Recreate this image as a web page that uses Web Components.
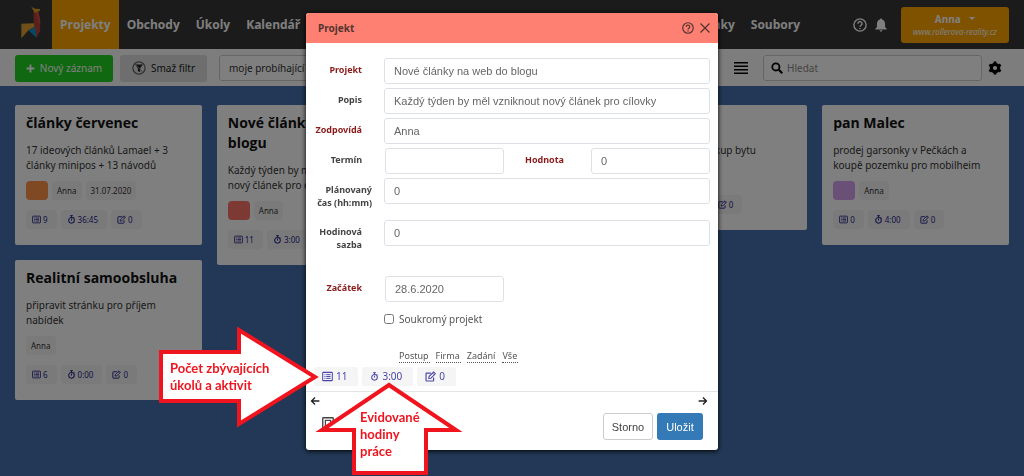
<!DOCTYPE html>
<html lang="cs">
<head>
<meta charset="utf-8">
<title>Projekty</title>
<style>
  html, body { height: 100%; margin: 0; }
  body { font: 10px/15px "Noto Sans", "Open Sans", sans-serif; color: #333; overflow: hidden; }
</style>
</head>
<body>
<crm-app></crm-app>
<script>
const ICONS = {
  list: '<rect x="1" y="2" width="14" height="12" rx="1" fill="none" stroke="currentColor" stroke-width="1.5"/><path d="M3.5 5.3h1.5M6.2 5.3h6.3M3.5 8h1.5M6.2 8h6.3M3.5 10.7h1.5M6.2 10.7h6.3" stroke="currentColor" stroke-width="1.4"/>',
  timer: '<circle cx="8" cy="9.5" r="5" fill="none" stroke="currentColor" stroke-width="1.8"/><path d="M5.5 1.2h5M8 1v3M8 6.5v3.5M12 4l1.5 1.5" stroke="currentColor" stroke-width="1.7"/>',
  edit: '<path d="M8.5 3H2.5a1 1 0 0 0-1 1v9.500a1 1 0 0 0 1 1h9a1 1 0 0 0 1-1V9.500" fill="none" stroke="currentColor" stroke-width="1.7"/><path d="M5.500 10.800l.5-3L12.500 1.500l2.500 2.500-6.500 6.500z" fill="none" stroke="currentColor" stroke-width="1.500"/><path d="M11 3l2.500 2.500" stroke="currentColor" stroke-width="1.200"/>',
  help: '<circle cx="8" cy="8" r="7" fill="none" stroke="currentColor" stroke-width="1.600"/><path d="M5.700 6.500a2.300 2.300 0 1 1 3.600 1.800c-.9.600-1.300.9-1.300 1.800" fill="none" stroke="currentColor" stroke-width="1.600"/><circle cx="8" cy="12" r=".9" fill="currentColor"/>',
  bell: '<path d="M8 .5a1.200 1.200 0 0 1 1.200 1.300C11.500 2.400 12.700 4.500 12.700 7v3.500l1.800 1.800v.9h-13v-.9l1.800-1.800V7c0-2.500 1.200-4.600 3.500-5.200A1.200 1.200 0 0 1 8 .5zM6.400 14h3.200a1.600 1.600 0 0 1-3.200 0z" fill="currentColor"/>',
  plus: '<path d="M8 1v14M1 8h14" stroke="currentColor" stroke-width="3.400"/>',
  filter: '<circle cx="8" cy="8" r="7" fill="none" stroke="#666" stroke-width="1.500"/><path d="M3.500 4h9L9.300 8.200v4.600l-2.600-1.500V8.200z" fill="currentColor"/><path d="M3.500 3.500l9 9.500" stroke="#888" stroke-width="1"/>',
  lines: '<path d="M0 2h16M0 6h16M0 10h16M0 14h16" stroke="currentColor" stroke-width="1.900"/>',
  search: '<circle cx="6.500" cy="6.500" r="4.800" fill="none" stroke="currentColor" stroke-width="2.400"/><path d="M10 10l5 5" stroke="currentColor" stroke-width="2.800"/>',
  gear: '<circle cx="8" cy="8" r="4.200" fill="none" stroke="currentColor" stroke-width="3.600"/><path d="M8 .500v3M8 12.500v3M1.500 4.250l2.600 1.500M11.900 10.250l2.600 1.500M1.500 11.750l2.600-1.500M11.900 5.750l2.600-1.500" stroke="currentColor" stroke-width="3.200"/>',
  close: '<path d="M2 2l12 12M14 2L2 14" stroke="currentColor" stroke-width="1.700"/>',
  left: '<path d="M15 8H3M8 2.500L2.500 8 8 13.500" fill="none" stroke="currentColor" stroke-width="2.200"/>',
  right: '<path d="M1 8h12M8 2.500L13.500 8 8 13.500" fill="none" stroke="currentColor" stroke-width="2.200"/>',
  note: '<rect x="1" y="1" width="14" height="14" rx="1" fill="none" stroke="currentColor" stroke-width="1.800"/><rect x="4.500" y="4.500" width="7" height="7" fill="none" stroke="currentColor" stroke-width="1.600"/>'
};

// Registers an element whose shadow root is rendered from its attributes.
function element(name, css, render) {
  customElements.define(name, class extends HTMLElement {
    constructor() {
      super();
      this.attachShadow({ mode: 'open' });
    }
    connectedCallback() {
      const t = document.createElement('template');
      t.innerHTML = '<style>*{box-sizing:border-box}button,input,select{font:inherit;color:inherit;margin:0}button{border:0;background:none;padding:0}a{color:inherit;text-decoration:none}' + css + '</style>' +
        render(key => this.getAttribute(key) || '', this);
      this.shadowRoot.replaceChildren(t.content.cloneNode(true));
    }
  });
}

element('ui-icon', ':host{display:block;flex:none;width:12px;height:12px}svg{display:block;width:100%;height:100%}',
  a => `<svg viewBox="0 0 16 16" aria-hidden="true">${ICONS[a('name')]}</svg>`);

element('crm-logo', ':host{display:block;flex:none;width:21px;height:33px}svg{display:block;width:100%;height:100%}',
  () => `<svg viewBox="30 17 63 99" aria-hidden="true">
    <path d="M70 36L85 34 91 62 90 92 80 113 73 90z" fill="#b5413a"/>
    <path d="M78 36L85 34 91 62 88 72z" fill="#d2503e"/>
    <path d="M64 19L75 25 91 26 89 32 74 38z" fill="#e09a1e"/>
    <path d="M34 70L72 69 73 80 56 89 34 114z" fill="#e0a030"/>
    <path d="M55 90L75 80 80 113z" fill="#1290c4"/>
    <path d="M30 78L35 70 35 78z" fill="#3a8ac0"/></svg>`);

element('crm-nav', `
  :host{display:flex;align-items:stretch;min-height:49px;background:#363636;color:#fff;padding:0 15px 0 20px}
  crm-logo{margin:6px 11px 0 0}
  nav{display:flex;flex:1;font:700 12px/49px "Open Sans","Noto Sans",sans-serif}
  a{padding:0 8px}
  a.on{background:#ffa500}
  .gap{flex:1}
  .tools{display:flex;align-items:center;gap:7px;margin:0 13px 0 45px}
  ui-icon{width:14px;height:14px}
  .me{align-self:center;width:108px;height:36px;margin-top:1px;border-radius:3px;background:#ffa500;font-size:8px;line-height:12px;font-style:italic}
  .me b{display:block;font-size:10px;font-style:normal;line-height:13px}
  .me i{display:inline-block;border:3px solid transparent;border-top-color:#fff;border-bottom:0;margin:0 0 3px 6px}`,
  () => `<crm-logo></crm-logo>
  <nav><a class="on" href="#projekty">Projekty</a><a href="#obchody">Obchody</a><a href="#ukoly">Úkoly</a><a href="#kalendar">Kalendář</a>
  <span class="gap"></span><a href="#stranky">Stránky</a><a href="#soubory">Soubory</a></nav>
  <div class="tools"><button aria-label="Nápověda"><ui-icon name="help"></ui-icon></button><button aria-label="Upozornění"><ui-icon name="bell"></ui-icon></button></div>
  <button class="me"><b>Anna <i></i></b>www.rollerova-reality.cz</button>`);

element('crm-toolbar', `
  :host{display:flex;align-items:center;min-height:37px;padding:1px 22px 0 15px;background:#fbfbfb;color:#333}
  button{display:flex;align-items:center;justify-content:center;height:27px;border-radius:3px}
  .new{width:98px;gap:5px;background:#20d020;color:#fff}
  .new ui-icon{width:9px;height:9px}
  .clear{width:87px;gap:5px;margin:0 12px 0 7px;background:#dcdcdc;color:#222}
  .clear ui-icon{width:14px;height:14px}
  select{appearance:none;width:190px;height:26px;padding:0 9px;border:1px solid #ccc;border-radius:3px;background:#fff}
  .gap{flex:1}
  .view,.gear{color:#000}
  .view ui-icon,.gear ui-icon{width:14px;height:14px}
  label{display:flex;align-items:center;gap:4px;width:219px;height:26px;margin:0 6px 0 15px;padding-left:7px;border:1px solid #ccc;border-radius:3px;background:#fff;color:#000}
  input{flex:1;min-width:0;border:0;background:none;padding:0}
  input::placeholder{color:#888;opacity:1}`,
  () => `<button class="new"><ui-icon name="plus"></ui-icon>Nový záznam</button>
  <button class="clear"><ui-icon name="filter"></ui-icon>Smaž filtr</button>
  <select aria-label="Filtr"><option>moje probíhající</option></select>
  <span class="gap"></span>
  <button class="view" aria-label="Seznam"><ui-icon name="lines"></ui-icon></button>
  <label><ui-icon name="search"></ui-icon><input type="search" placeholder="Hledat" aria-label="Hledat"></label>
  <button class="gear" aria-label="Nastavení"><ui-icon name="gear"></ui-icon></button>`);

element('stat-chip', `
  :host{display:flex;align-items:center;height:19px;gap:2px;padding:0 9px 0 6px;border-radius:4px;background:#f5f5f5;color:#24248c;font-size:8px}
  ui-icon{width:9px;height:9px}
  :host([large]){gap:3px;padding:0 11px 0 8px;border-radius:3px 3px 0 0;color:#4a45a8;font-size:10px}
  :host([large]) ui-icon{width:11px;height:11px}
  :host([large]) ui-icon[name=timer]{width:9px;height:9px}`,
  a => `<ui-icon name="${a('icon')}"></ui-icon><span><slot></slot></span>`);

element('project-card', `
  :host{display:block;padding:8px 11px 16px;border-radius:2px;background:#fff}
  h2{margin:0 0 10px;font:700 14px/20px "Open Sans","Noto Sans",sans-serif;color:#111}
  p{margin:0 0 8px;padding-right:8px}
  div{display:flex;gap:4px;height:19px}
  .tags{margin-bottom:10px;font-size:8px;line-height:19px}
  .tags span{padding:0 5px;border-radius:4px;background:#f5f5f5}
  .tags .c{width:22px;padding:0}`,
  a => `<h2>${a('name')}</h2><p><slot></slot></p>
  <div class="tags">${a('color') && `<span class="c" style="background:${a('color')}"></span>`}<span>Anna</span>${a('date') && `<span>${a('date')}</span>`}</div>
  <div><stat-chip icon="list">${a('tasks')}</stat-chip><stat-chip icon="timer">${a('time')}</stat-chip><stat-chip icon="edit">0</stat-chip></div>`);

element('crm-board', `
  :host{display:grid;grid-template-columns:repeat(5,minmax(0,1fr));gap:15px;padding:19px 15px;background:#4671ac}
  section{display:flex;flex-direction:column;gap:15px}`,
  () => `<section>
    <project-card name="články červenec" color="#ff9248" date="31.07.2020" tasks="9" time="36:45">17 ideových článků Lamael + 3 články minipos + 13 návodů</project-card>
    <project-card name="Realitní samoobsluha" tasks="6" time="0:00">připravit stránku pro příjem nabídek</project-card></section>
  <section><project-card name="Nové články na web do blogu" color="#fa7268" tasks="11" time="3:00">Každý týden by měl vzniknout nový článek pro cílovky</project-card></section>
  <section></section>
  <section><project-card name="Byt" color="#fa7268" tasks="0" time="0:00">prodej domu a nákup bytu</project-card></section>
  <section><project-card name="pan Malec" color="#d4a0ee" tasks="0" time="4:00">prodej garsonky v Pečkách a koupě pozemku pro mobilheim</project-card></section>`);

element('form-field', `
  :host{display:grid;grid-template-columns:78px 1fr;align-items:start}
  label{padding:5px 22px 0 0;text-align:right;font-size:9px;font-weight:700;line-height:13px;color:#444}
  :host([required]) label{color:#8b1a1a}
  :host([wide-label]) label{padding-right:12px}
  input{width:100%;height:26px;padding:0 9px;border:1px solid #dde1e5;border-radius:3px;background:#fff;color:#666;font:11px "Liberation Sans",Arial,sans-serif}
  :host([short]) input{width:119px;justify-self:end}
  :host([start]) input{justify-self:start;margin-left:1px}`,
  a => `<label for="f">${a('label')}</label><input id="f" value="${a('value')}">`);

element('callout-arrow', `
  :host{display:block;position:absolute;color:#f0141e;font:700 13px/17px Lato,sans-serif}
  svg{display:block;overflow:visible}
  path{fill:#fff;stroke:#f0141e;stroke-width:4}
  p{position:absolute;margin:0;white-space:pre-line}
  :host([side]) p{left:11px;top:36px}
  :host([up]) p{left:47px;top:28px}`,
  (a, el) => el.hasAttribute('side')
    ? `<svg width="160" height="106"><path d="M2 28H80V6L156 53 80 100V77H2z"/></svg><p><slot></slot></p>`
    : `<svg width="152" height="96"><path d="M76 4L143 49H113V92H41V49H9z"/></svg><p><slot></slot></p>`);

element('project-dialog', `
  :host{display:block;position:relative;width:412px;border-radius:3px;background:#fff;box-shadow:0 1px 5px #000}
  header{display:flex;align-items:center;gap:5px;height:30px;padding:0 7px 0 12px;border-radius:3px 3px 0 0;background:#fd8072;color:#54342e}
  h1{flex:1;margin:0;font-size:10px;line-height:15px}
  ui-icon{width:12px;height:12px}
  form{display:flex;flex-direction:column;gap:4px;padding:15px 8px 0 0}
  .pair{display:grid;grid-template-columns:1fr 1fr}
  .rate{margin-top:7px}
  .start{margin-top:21px}
  .private{display:flex;align-items:center;gap:5px;height:16px;margin:5px 0 0 78px;color:#555}
  .private input{width:10px;height:10px}
  .tabs{display:flex;gap:6px;margin:19px 0 0 93px;font-size:9px;line-height:12px;color:#555}
  .tabs a{border-bottom:1px dotted #555;padding-right:1px}
  .stats{display:flex;gap:4px;padding:4px 8px 5px;border-bottom:1px solid #e2e5e8}
  .move{display:flex;justify-content:space-between;padding:4px 10px 0 4px;color:#222}
  .move ui-icon{width:10px;height:10px}
  footer{display:flex;align-items:flex-start;gap:4px;padding:7px 15px 10px 16px;color:#444;font:11px "Liberation Sans",Arial,sans-serif}
  footer span{flex:1}
  footer .note{padding-top:4px}
  footer .b{height:27px;border-radius:3px}
  .cancel{width:50px;border:1px solid #ccc}
  .save{width:46px;background:#337ab7;color:#fff}
  .one{left:-147px;top:311px}
  .two{left:7px;top:368px}`,
  () => `<header><h1>Projekt</h1><button aria-label="Nápověda"><ui-icon name="help"></ui-icon></button><button aria-label="Zavřít"><ui-icon name="close"></ui-icon></button></header>
  <form>
    <form-field required label="Projekt" value="Nové články na web do blogu"></form-field>
    <form-field label="Popis" value="Každý týden by měl vzniknout nový článek pro cílovky"></form-field>
    <form-field required label="Zodpovídá" value="Anna"></form-field>
    <div class="pair"><form-field short start label="Termín"></form-field><form-field short required label="Hodnota" value="0"></form-field></div>
    <form-field wide-label label="Plánovaný čas&nbsp;(hh:mm)" value="0"></form-field>
    <form-field class="rate" label="Hodinová sazba" value="0"></form-field>
    <form-field class="start" short start required label="Začátek" value="28.6.2020"></form-field>
    <label class="private"><input type="checkbox">Soukromý projekt</label>
    <div class="tabs"><a href="#postup">Postup</a><a href="#firma">Firma</a><a href="#zadani">Zadání</a><a href="#vse">Vše</a></div>
  </form>
  <div class="stats"><stat-chip large icon="list">11</stat-chip><stat-chip large icon="timer">3:00</stat-chip><stat-chip large icon="edit">0</stat-chip></div>
  <div class="move"><button aria-label="Předchozí"><ui-icon name="left"></ui-icon></button><button aria-label="Další"><ui-icon name="right"></ui-icon></button></div>
  <footer><button class="note" aria-label="Poznámka"><ui-icon name="note"></ui-icon></button><span></span><button class="b cancel">Storno</button><button class="b save">Uložit</button></footer>
  <callout-arrow class="one" side>Počet zbývajících
úkolů a aktivit</callout-arrow>
  <callout-arrow class="two" up>Evidované
hodiny
práce</callout-arrow>`);

element('crm-app', `
  :host{display:flex;flex-direction:column;min-height:100vh}
  crm-board{flex:1}
  .shade{position:fixed;inset:0;display:flex;justify-content:center;align-items:flex-start;padding-top:13px;background:rgba(0,0,0,.5)}`,
  () => `<crm-nav></crm-nav><crm-toolbar></crm-toolbar><crm-board></crm-board>
  <div class="shade"><project-dialog role="dialog" aria-label="Projekt"></project-dialog></div>`);
</script>
</body>
</html>
